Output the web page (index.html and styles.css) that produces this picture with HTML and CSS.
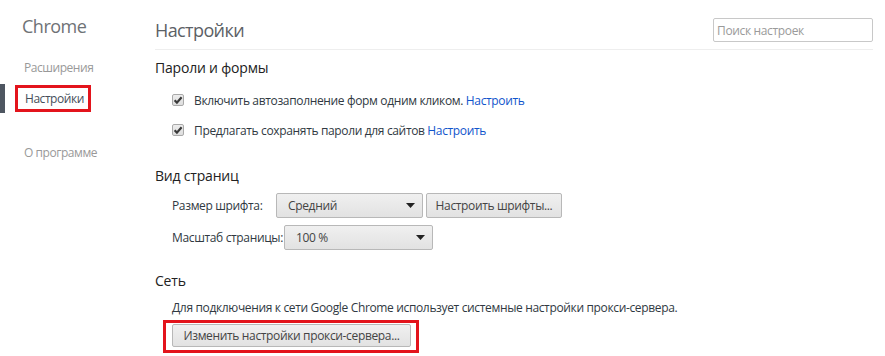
FILE: index.html
```html
<!DOCTYPE html>
<html lang="ru">
<head>
  <meta charset="UTF-8">
  <title>Настройки</title>
  <link rel="stylesheet" href="styles.css">
</head>
<body>
  <div class="page">
    <!-- боковое меню -->
    <nav class="sidebar">
      <div class="brand">Chrome</div>
      <ul class="nav">
        <li class="nav-item">Расширения</li>
        <li class="nav-item active">
          <span class="active-bar"></span>
          <span class="highlight nav-mark">Настройки</span>
        </li>
        <li class="nav-item about">О программе</li>
      </ul>
    </nav>

    <!-- основная часть -->
    <main class="content">
      <header class="top">
        <h1>Настройки</h1>
        <input class="search" type="text" placeholder="Поиск настроек">
      </header>

      <section class="section first">
        <h3>Пароли и формы</h3>
        <div class="section-body">
          <div class="check-row">
            <span class="checkbox">
              <svg width="12" height="12" viewBox="0 0 12 12"><path d="M2.6 6.2 L4.9 8.6 L9.6 3.2" fill="none" stroke="#3a3a3a" stroke-width="2.2"/></svg>
            </span>
            <span>Включить автозаполнение форм одним кликом. <a class="link">Настроить</a></span>
          </div>
          <div class="check-row">
            <span class="checkbox">
              <svg width="12" height="12" viewBox="0 0 12 12"><path d="M2.6 6.2 L4.9 8.6 L9.6 3.2" fill="none" stroke="#3a3a3a" stroke-width="2.2"/></svg>
            </span>
            <span>Предлагать сохранять пароли для сайтов <a class="link">Настроить</a></span>
          </div>
        </div>
      </section>

      <section class="section">
        <h3>Вид страниц</h3>
        <div class="section-body">
          <div class="field-row">
            <span class="field-label font-label">Размер шрифта:</span>
            <div class="select font-select">
              <span>Средний</span>
              <svg width="9" height="5" viewBox="0 0 9 5"><path d="M0 0 H9 L4.5 5 Z" fill="#222"/></svg>
            </div>
            <button class="btn fonts-btn">Настроить шрифты...</button>
          </div>
          <div class="field-row">
            <span class="field-label zoom-label">Масштаб страницы:</span>
            <div class="select zoom-select">
              <span>100 %</span>
              <svg width="9" height="5" viewBox="0 0 9 5"><path d="M0 0 H9 L4.5 5 Z" fill="#222"/></svg>
            </div>
          </div>
        </div>
      </section>

      <section class="section">
        <h3>Сеть</h3>
        <div class="section-body">
          <p class="desc">Для подключения к сети Google Chrome использует системные настройки прокси-сервера.</p>
        </div>
        <div class="highlight proxy-mark">
          <button class="btn proxy-btn">Изменить настройки прокси-сервера...</button>
        </div>
      </section>
    </main>
  </div>
</body>
</html>
```

FILE: styles.css
```css
body {
  margin: 0;
  font-family: 'Open Sans', 'Noto Sans', sans-serif;
  font-size: 12px;
  letter-spacing: -0.35px;
  color: #303942;
  background: #fff;
}

.page {
  display: flex;
  height: 356px;
  overflow: hidden;
  white-space: nowrap;
}

/* боковое меню */
.sidebar {
  width: 155px;
  flex-shrink: 0;
}

.brand {
  margin-top: 14px;
  padding-left: 22px;
  font-size: 18px;
  line-height: 24px;
  letter-spacing: -0.5px;
  color: #6e7276;
}

.nav {
  list-style: none;
  margin: 15px 0 0;
  padding: 0;
}

.nav-item {
  height: 30px;
  line-height: 30px;
  padding-left: 24px;
  letter-spacing: -0.45px;
  color: #999;
}

.nav-item.active {
  display: flex;
  align-items: center;
  padding-left: 0;
  color: #464e5a;
}

.nav-item.about {
  margin-top: 25px;
}

.active-bar {
  width: 5px;
  height: 29px;
  background: #4e5661;
}

.highlight {
  border: 3px solid #e3141c;
}

.nav-mark {
  margin-left: 10px;
  height: 21px;
  line-height: 21px;
  padding: 0 4px 0 7px;
}

/* основная часть */
.content {
  flex: 1;
  padding-right: 12px;
}

.top {
  display: flex;
  justify-content: space-between;
  align-items: center;
  padding: 18px 0 7px;
  border-bottom: 1px solid #eee;
}

.top h1 {
  margin: 0;
  font-size: 18px;
  font-weight: normal;
  line-height: 24px;
  letter-spacing: -0.6px;
  color: #5c6166;
}

.search {
  box-sizing: border-box;
  width: 160px;
  height: 24px;
  margin: 0;
  padding: 0 3px;
  border: 1px solid #c8c8c8;
  border-radius: 2px;
  font-family: inherit;
  font-size: 12px;
  letter-spacing: -0.35px;
  color: #303942;
}

.search::placeholder {
  color: #9a9a9a;
}

.section {
  margin-top: 21px;
}

.section.first {
  margin-top: 8px;
}

.section h3 {
  margin: 0 0 7px;
  font-size: 14px;
  font-weight: normal;
  line-height: 20px;
  letter-spacing: -0.2px;
  color: #222;
}

.section-body {
  padding-left: 17px;
}

.check-row {
  display: flex;
  align-items: center;
  height: 30px;
  gap: 10px;
}

.checkbox {
  box-sizing: border-box;
  width: 12px;
  height: 12px;
  display: flex;
  border: 1px solid #a9a9a9;
  border-radius: 2px;
  background: linear-gradient(#ededed, #dedede);
}

.checkbox svg {
  margin: -1px;
}

.link {
  color: #15c;
  cursor: pointer;
}

.field-row {
  display: flex;
  align-items: center;
  height: 25px;
}

.field-row + .field-row {
  margin-top: 7px;
}

.font-label {
  width: 104px;
}

.zoom-label {
  width: 112px;
}

.select,
.btn {
  box-sizing: border-box;
  height: 25px;
  border: 1px solid #b8b8b8;
  border-radius: 2px;
  background: linear-gradient(#f0f0f0, #e2e2e2);
  font-family: inherit;
  font-size: 12px;
  letter-spacing: -0.35px;
  color: #444;
}

.select {
  display: flex;
  align-items: center;
  justify-content: space-between;
  padding: 0 7px 0 11px;
}

.font-select {
  width: 147px;
}

.zoom-select {
  width: 149px;
}

.btn {
  padding: 0 8px;
  margin: 0;
  white-space: nowrap;
}

.fonts-btn {
  margin-left: 3px;
  width: 136px;
}

.desc {
  margin: 0;
  line-height: 20px;
}

.proxy-mark {
  display: inline-block;
  margin: 2px 0 0 8px;
  padding: 1px 5px 3px 6px;
}

.proxy-btn {
  display: block;
  width: 239px;
  height: 23px;
}
```
